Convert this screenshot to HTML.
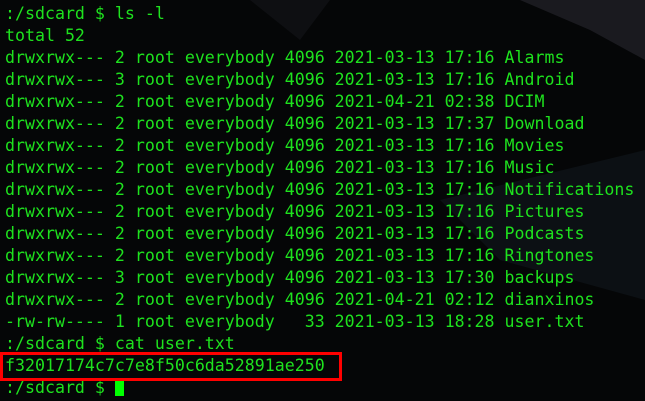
<!DOCTYPE html><html><head><style>
body{margin:0;width:645px;height:401px;background:#050607;overflow:hidden;position:relative}
pre{position:absolute;left:5px;top:3px;margin:0;font-family:"DejaVu Sans Mono",monospace;font-size:16.6px;line-height:22px;color:#1ee21e;white-space:pre}
.box{position:absolute;left:0;top:352px;width:336px;height:23px;border:3px solid #f00}
.cur{display:inline-block;width:9px;height:17px;background:#00ff00;vertical-align:-3px}
</style></head><body>
<svg width="645" height="401" style="position:absolute;left:0;top:0">
<polygon points="520,0 645,0 645,60 590,30" fill="#1a1a1f"/>
<polygon points="250,0 330,0 300,40" fill="#0e0f12"/>
<polygon points="440,200 645,150 645,300 500,260" fill="#0c1014"/>
</svg>
<pre>:/sdcard $ ls -l
total 52
drwxrwx--- 2 root everybody 4096 2021-03-13 17:16 Alarms
drwxrwx--- 3 root everybody 4096 2021-03-13 17:16 Android
drwxrwx--- 2 root everybody 4096 2021-04-21 02:38 DCIM
drwxrwx--- 2 root everybody 4096 2021-03-13 17:37 Download
drwxrwx--- 2 root everybody 4096 2021-03-13 17:16 Movies
drwxrwx--- 2 root everybody 4096 2021-03-13 17:16 Music
drwxrwx--- 2 root everybody 4096 2021-03-13 17:16 Notifications
drwxrwx--- 2 root everybody 4096 2021-03-13 17:16 Pictures
drwxrwx--- 2 root everybody 4096 2021-03-13 17:16 Podcasts
drwxrwx--- 2 root everybody 4096 2021-03-13 17:16 Ringtones
drwxrwx--- 3 root everybody 4096 2021-03-13 17:30 backups
drwxrwx--- 2 root everybody 4096 2021-04-21 02:12 dianxinos
-rw-rw---- 1 root everybody   33 2021-03-13 18:28 user.txt
:/sdcard $ cat user.txt
f32017174c7c7e8f50c6da52891ae250
:/sdcard $ <span class="cur"></span></pre>
<div class="box"></div>
</body></html>
